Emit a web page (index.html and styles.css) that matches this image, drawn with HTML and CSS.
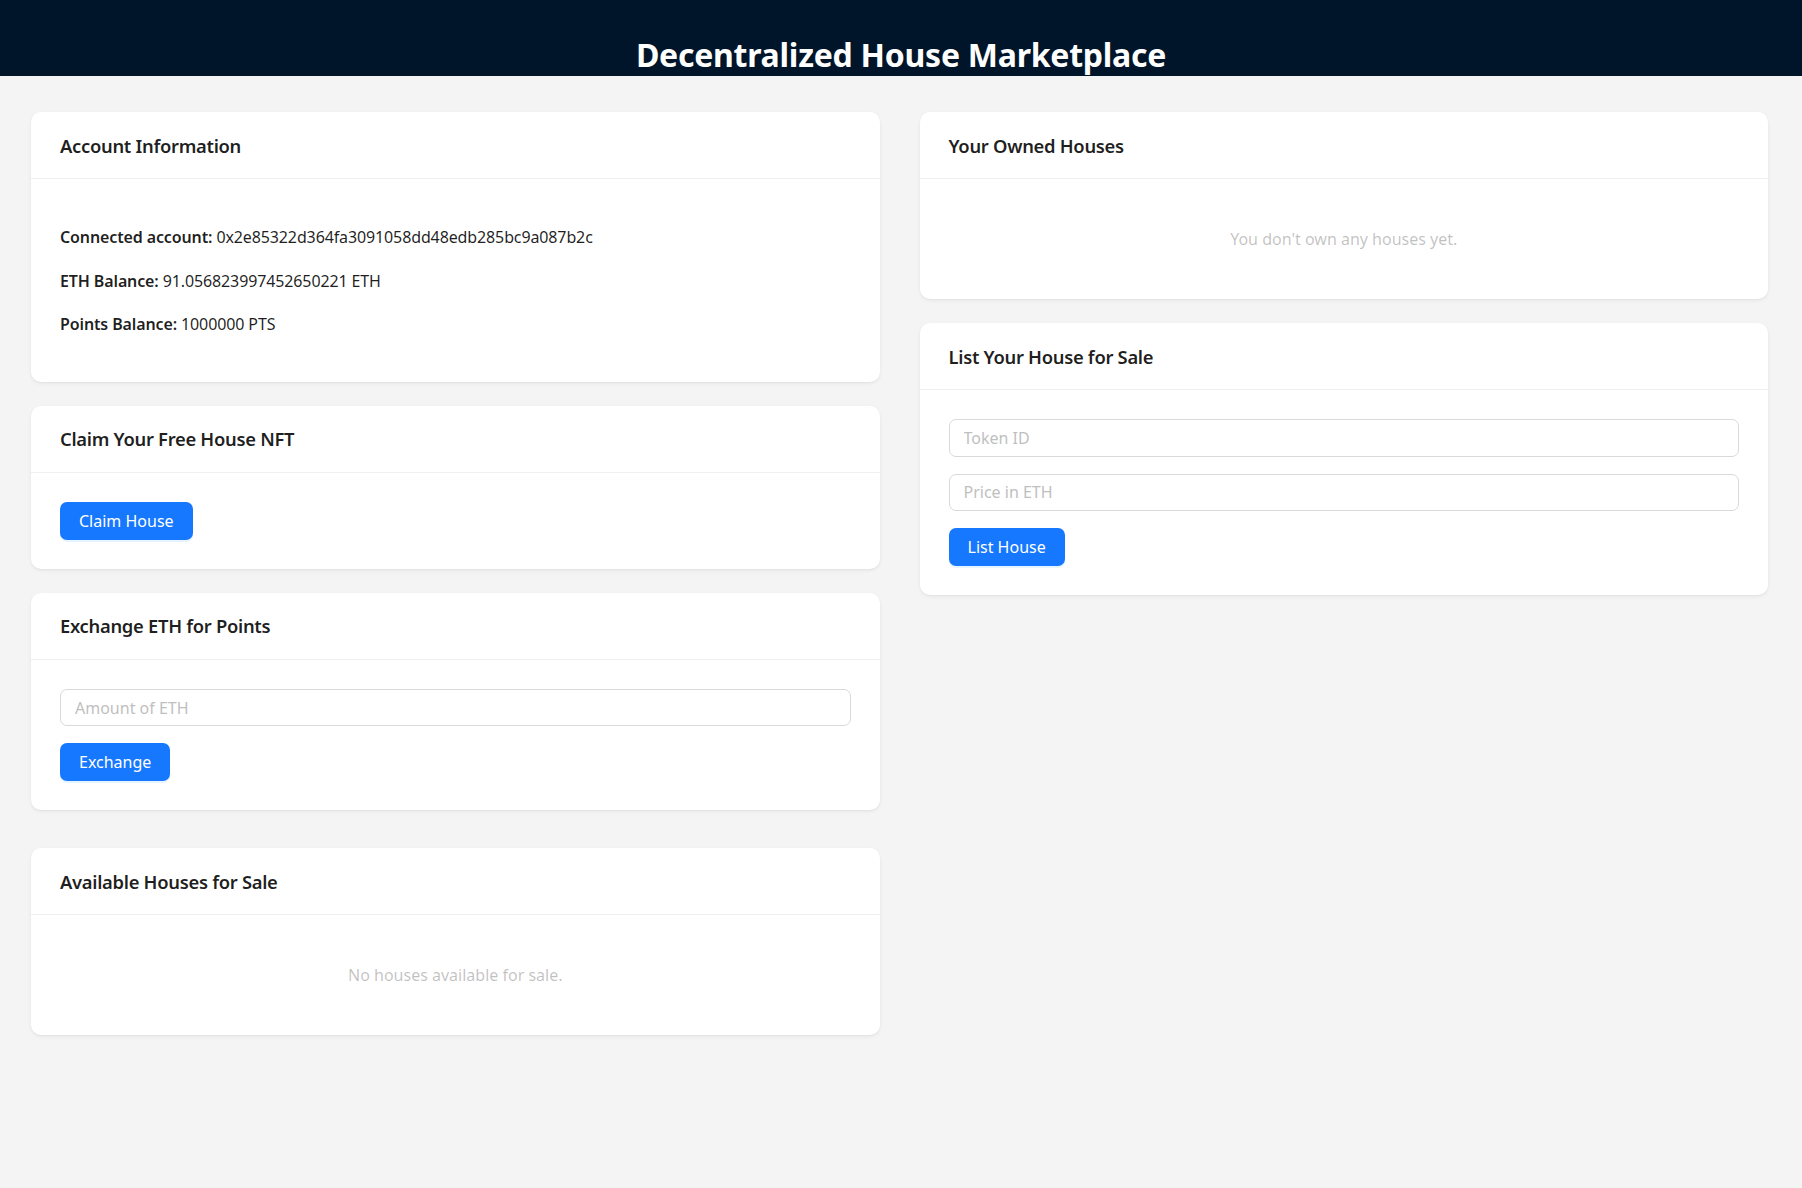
FILE: index.html
```html
<!DOCTYPE html>
<html lang="en">
<head>
<meta charset="utf-8">
<title>Decentralized House Marketplace</title>
<link rel="stylesheet" href="styles.css">
</head>
<body>
<header class="app-header">
  <h1 class="app-title">Decentralized House Marketplace</h1>
</header>
<main class="layout">
  <div class="column">
    <section class="card">
      <div class="card-head"><h2 class="card-title">Account Information</h2></div>
      <div class="card-body card-body-info">
        <p class="info-line"><strong>Connected account:</strong> 0x2e85322d364fa3091058dd48edb285bc9a087b2c</p>
        <p class="info-line"><strong>ETH Balance:</strong> 91.056823997452650221 ETH</p>
        <p class="info-line"><strong>Points Balance:</strong> 1000000 PTS</p>
      </div>
    </section>
    <section class="card">
      <div class="card-head"><h2 class="card-title">Claim Your Free House NFT</h2></div>
      <div class="card-body">
        <button class="btn" type="button">Claim House</button>
      </div>
    </section>
    <section class="card">
      <div class="card-head"><h2 class="card-title">Exchange ETH for Points</h2></div>
      <div class="card-body">
        <input class="field" type="text" placeholder="Amount of ETH">
        <button class="btn" type="button">Exchange</button>
      </div>
    </section>
    <section class="card card-market">
      <div class="card-head"><h2 class="card-title">Available Houses for Sale</h2></div>
      <div class="card-body">
        <p class="empty">No houses available for sale.</p>
      </div>
    </section>
  </div>
  <div class="column">
    <section class="card">
      <div class="card-head"><h2 class="card-title">Your Owned Houses</h2></div>
      <div class="card-body">
        <p class="empty">You don't own any houses yet.</p>
      </div>
    </section>
    <section class="card">
      <div class="card-head"><h2 class="card-title">List Your House for Sale</h2></div>
      <div class="card-body">
        <input class="field" type="text" placeholder="Token ID">
        <input class="field" type="text" placeholder="Price in ETH">
        <button class="btn" type="button">List House</button>
      </div>
    </section>
  </div>
</main>
</body>
</html>
```
FILE: styles.css
```css
* {
  box-sizing: border-box;
}

html, body {
  margin: 0;
  padding: 0;
}

body {
  background: #f4f4f4;
  font-family: "Noto Sans", "Open Sans", sans-serif;
  font-size: 16px;
  color: rgba(0, 0, 0, 0.88);
  min-height: 1188px;
}

.app-header {
  height: 76px;
  background: #001529;
  overflow: visible;
}

.app-title {
  margin: 0;
  padding-top: 38.5px;
  font-size: 32px;
  line-height: 1;
  font-weight: 700;
  letter-spacing: -0.25px;
  color: #ffffff;
  text-align: center;
  white-space: nowrap;
}

.layout {
  display: grid;
  grid-template-columns: 1fr 1fr;
  column-gap: 40px;
  align-items: start;
  padding: 36px 34px 40px 31px;
}

.column {
  display: flex;
  flex-direction: column;
  gap: 24px;
}

.card {
  background: #ffffff;
  border-radius: 10px;
  box-shadow: 0 1px 2px rgba(0, 0, 0, 0.04), 0 1px 6px -1px rgba(0, 0, 0, 0.03), 0 2px 4px rgba(0, 0, 0, 0.03);
}

.card-market {
  margin-top: 14px;
}

.card-head {
  height: 67px;
  display: flex;
  align-items: center;
  padding: 0 29px;
  border-bottom: 1px solid #f0f0f0;
}

.card-title {
  margin: 0;
  font-size: 18.4px;
  font-weight: 600;
  letter-spacing: -0.3px;
  color: rgba(0, 0, 0, 0.88);
}

.card-body {
  padding: 29px;
  display: flex;
  flex-direction: column;
  align-items: flex-start;
}

.card-body-info {
  display: block;
  padding-bottom: 28px;
}

.info-line {
  margin: 15px 0;
  line-height: 28.6px;
  letter-spacing: -0.12px;
}

.info-line strong {
  font-weight: 600;
}

.empty {
  align-self: stretch;
  margin: 0;
  padding: 18px 0;
  line-height: 26px;
  text-align: center;
  color: rgba(0, 0, 0, 0.25);
}

.field {
  align-self: stretch;
  height: 37.5px;
  margin: 0 0 17px;
  padding: 0 14px;
  border: 1px solid #d9d9d9;
  border-radius: 7px;
  background: #ffffff;
  font-family: inherit;
  font-size: 16px;
  color: rgba(0, 0, 0, 0.88);
  outline: none;
}

.field::placeholder {
  color: #bfbfbf;
}

.btn {
  height: 38px;
  padding: 0 19px;
  border: none;
  border-radius: 7px;
  background: #1677ff;
  color: #ffffff;
  font-family: inherit;
  font-size: 16px;
  box-shadow: 0 2px 0 rgba(5, 145, 255, 0.1);
  cursor: pointer;
}
```
